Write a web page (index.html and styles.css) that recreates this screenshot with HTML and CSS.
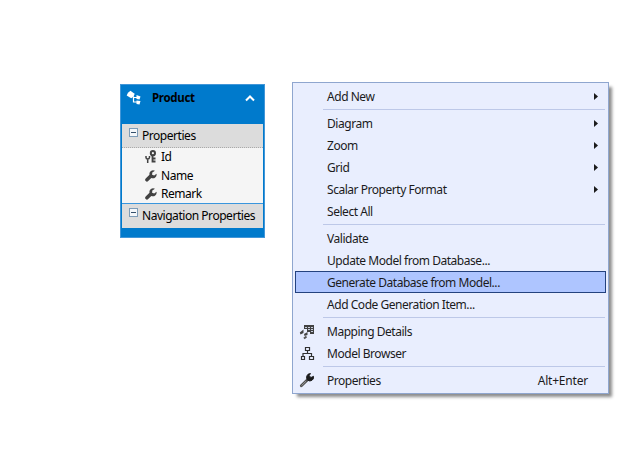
FILE: index.html
```
<!DOCTYPE html>
<html lang="en">
<head>
<meta charset="utf-8">
<title>Entity model designer</title>
<link rel="stylesheet" href="styles.css">
</head>
<body>
<svg width="0" height="0" class="defs">
  <symbol id="wrench" viewBox="0 0 12 12"><path d="M10 .8A3.700 3.700 0 0 0 4.500 4.800L.7 8.500a1.600 1.600 0 0 0 2.500 2.500L6.300 7.900a3.700 3.700 0 0 0 5.200-4.200L9.200 5.400 7.100 4.800 7.300 2.500z" fill="#424242"/></symbol>
  <symbol id="arrow" viewBox="0 0 4 7"><path d="M0 0 4 3.500 0 7z" fill="#1b1b1c"/></symbol>
</svg>
<main class="canvas">
  <section class="entity">
    <header class="entity-head">
      <svg class="entity-icon" width="16" height="16" viewBox="0 0 16 16"><path d="M4.500.8 6.500 2.200 8.700 3.800 7.500 6.800 5.200 8.300.7 5.500 2 2.800z" fill="#fff"/><path d="M7.500 6.500V12H11M8 7.500H11" fill="none" stroke="#fff" stroke-width="1.200"/><path d="M10.500 5 14.500 6.500 13.500 9.500 10.500 9zM10.500 10.500 14.500 11 13.500 14.500 10.500 14z" fill="#fff"/></svg>
      <h1 class="entity-name">Product</h1>
      <svg class="chevron" width="10" height="8" viewBox="0 0 10 8"><path d="M1 6.500 5 2.500 9 6.500" fill="none" stroke="#fff" stroke-width="2"/></svg>
    </header>
    <div class="group"><span class="toggle"></span><span>Properties</span></div>
    <ul class="fields">
      <li><svg width="12" height="14" viewBox="0 0 12 14"><g fill="none" stroke="#424242"><circle cx="7.900" cy="3.200" r="2.100" stroke-width="2"/><path d="M7.500 5V12.500M8 8.500h2.500M8 11.500h2.500" stroke-width="1.800"/><path d="M1 6v1.500Q1 9 2.700 9T4.500 7.500V6M2.700 9V13" stroke-width="1.500"/></g></svg><span>Id</span></li>
      <li><svg width="12" height="12"><use href="#wrench"/></svg><span>Name</span></li>
      <li><svg width="12" height="12"><use href="#wrench"/></svg><span>Remark</span></li>
    </ul>
    <div class="group nav"><span class="toggle"></span><span>Navigation Properties</span></div>
  </section>
  <nav class="menu">
    <div class="item"><span class="label">Add New</span><svg class="arrow" width="4" height="7"><use href="#arrow"/></svg></div>
    <hr>
    <div class="item"><span class="label">Diagram</span><svg class="arrow" width="4" height="7"><use href="#arrow"/></svg></div>
    <div class="item"><span class="label">Zoom</span><svg class="arrow" width="4" height="7"><use href="#arrow"/></svg></div>
    <div class="item"><span class="label">Grid</span><svg class="arrow" width="4" height="7"><use href="#arrow"/></svg></div>
    <div class="item"><span class="label">Scalar Property Format</span><svg class="arrow" width="4" height="7"><use href="#arrow"/></svg></div>
    <div class="item"><span class="label">Select All</span></div>
    <hr>
    <div class="item"><span class="label">Validate</span></div>
    <div class="item"><span class="label">Update Model from Database...</span></div>
    <div class="item selected"><span class="label">Generate Database from Model...</span></div>
    <div class="item"><span class="label">Add Code Generation Item...</span></div>
    <hr>
    <div class="item"><svg class="icon" width="16" height="16" viewBox="0 0 16 16"><path d="M5 1h10v9h-4V8H8V5H5z" fill="#424242"/><path d="M6 3.500h2M9 3.500h2M12 3.500h2M9 5.500h2M12 5.500h2M12 7.500h2" stroke="#c9cede"/><path d="M.8 8.500 4.500 5.500v3.500L1.500 10.500zM5 10 8.500 8v3L5.500 12z" fill="#444"/><path d="M5 14.500 7.500 12.500" stroke="#555" stroke-width="2"/></svg><span class="label">Mapping Details</span></div>
    <div class="item"><svg class="icon" width="16" height="16" viewBox="0 0 16 16"><path d="M6.500 1.500h4v3h-4zM2.500 10.500h3v3h-3zM10.500 10.500h4v3h-4zM8.500 4.500v3M4 10V7.500h8.500V10" fill="none" stroke="#303030" stroke-width="1.200"/></svg><span class="label">Model Browser</span></div>
    <hr>
    <div class="item"><svg class="icon" width="16" height="16" viewBox="0 0 16 16"><path d="M2.300 12.800 8.500 6.700" stroke="#505050" stroke-width="2.800" stroke-linecap="round"/><path d="M2.500 12.600 7 8.200" stroke="#aaa" stroke-width=".8"/><path d="M11.500.5 10.200 2.700 12 4.500 14.500 3.300A3.700 3.700 0 0 1 8.700 7.200 3.900 3.900 0 0 1 11.500.5z" fill="#1b1b1c" stroke="#1b1b1c" stroke-width=".9"/></svg><span class="label">Properties</span><span class="shortcut">Alt+Enter</span></div>
  </nav>
</main>
</body>
</html>
```
FILE: styles.css
```
* { box-sizing: border-box; }
body { margin: 0; background: #fff; font: 12px/16px "Noto Sans", "Open Sans", sans-serif; color: #1b1b1c; }
.defs { display: block; }
.canvas { display: flex; align-items: flex-start; gap: 27px; width: 640px; height: 458px; padding: 82px 0 0 120px; overflow: hidden; }
.entity { width: 145px; height: 154px; margin-top: 2px; border: 1px solid #4296d8; background: #007acc; padding: 0 1px; color: #000; }
.entity-head { display: flex; align-items: flex-start; height: 39px; padding: 5px 8px 0 4px; }
.entity-name { margin: 0 0 0 10px; font-size: 11.500px; line-height: 16px; font-weight: 700; letter-spacing: -.3px; }
.chevron { margin: 4px 0 0 auto; }
.group { display: flex; height: 24px; padding: 4px 0 0 7px; background: #dcdcdc; border-bottom: 1px dotted #aaa; white-space: nowrap; }
.group span + span { margin-left: 4px; }
.nav { border-bottom: 0; }
.toggle { flex: none; width: 9px; height: 9px; border: 1px solid #7d9cb8; background: linear-gradient(#35506b, #35506b) center / 5px 1px no-repeat, #f4f7fa; }
.fields { margin: 0; padding: 0 0 0 23px; list-style: none; height: 56px; background: #f5f5f5; border-bottom: 1px solid #3a96dd; }
.fields li { display: flex; align-items: center; gap: 4px; height: 18.500px; }
.menu { width: 317px; height: 312px; padding: 2px; background: #e9eefe; border: 1px solid #8fa6cf; box-shadow: 4px 4px 3px -1px rgba(0,0,0,.45); }
.item { display: flex; align-items: center; height: 22px; padding: 2px 17px 0 31px; border: 1px solid transparent; white-space: nowrap; }
.item:has(.icon) { padding-left: 3px; }
.icon { margin: -1px 12px 0 0; }
.item:has(.arrow) { padding-right: 7px; }
.arrow { margin-left: auto; margin-top: -1px; }
.shortcut { margin-left: auto; letter-spacing: -.2px; }
.selected { background: #aec5ff; border-color: #24427e; }
hr { height: 1px; margin: 2px 1px 2px 28px; border: 0; background: #bdc8e8; }
.label, .group span, .fields span { letter-spacing: -.46px; }
```
